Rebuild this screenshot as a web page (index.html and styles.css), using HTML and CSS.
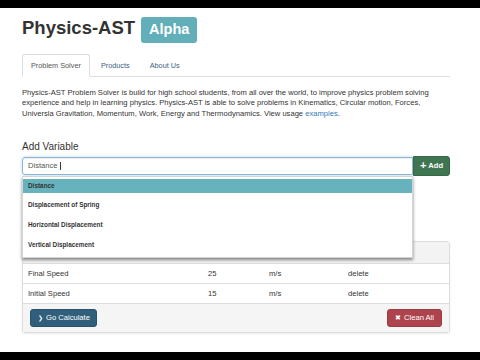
FILE: index.html
```html
<!DOCTYPE html>
<html>
<head>
    <title>Physics-AST</title>
    <link rel="stylesheet" href="styles.css">
</head>
<body>
<div class="screen">
    <div class="container">
        <header class="page-head">
            <h1>Physics-AST</h1>
            <span class="badge">Alpha</span>
        </header>

        <ul class="tabs">
            <li class="active"><a>Problem Solver</a></li>
            <li><a>Products</a></li>
            <li><a>About Us</a></li>
        </ul>

        <p class="intro">Physics-AST Problem Solver is build for high school students, from all over the world, to improve physics problem solving experience and help in learning physics. Physics-AST is able to solve problems in Kinematics, Circular motion, Forces, Universla Gravitation, Momentum, Work, Energy and Thermodynamics. View usage <a class="link">examples</a>.</p>

        <h4>Add Variable</h4>
        <div class="var-box">
            <div class="input-group">
                <div class="field">Distance<span class="caret"></span></div>
                <button class="btn btn-add"><span class="plus">+</span>Add</button>
            </div>
            <ul class="suggest">
                <li class="active">Distance</li>
                <li>Displacement of Spring</li>
                <li>Horizontal Displacement</li>
                <li>Vertical Displacement</li>
            </ul>
        </div>

        <div class="panel">
            <div class="panel-head"></div>
            <div class="row">
                <span class="c1">Final Speed</span><span class="c2">25</span><span class="c3">m/s</span><span class="c4">delete</span>
            </div>
            <div class="row">
                <span class="c1">Initial Speed</span><span class="c2">15</span><span class="c3">m/s</span><span class="c4">delete</span>
            </div>
            <div class="panel-foot">
                <button class="btn btn-go"><span class="chev">&#x276F;</span>Go Calculate</button>
                <button class="btn btn-clean"><span class="x">&#x2716;</span>Clean All</button>
            </div>
        </div>
    </div>
</div>
</body>
</html>
```

FILE: styles.css
```css
body {
    margin: 0;
    background: #000;
    font-family: "Liberation Sans", Arial, sans-serif;
    font-size: 7.6px;
    color: #333;
}

.screen {
    margin-top: 8px;
    height: 344px;
    background: #fff;
    overflow: hidden;
}

.container {
    width: 428px;
    padding-left: 22px;
}

/* Kopfzeile */
.page-head {
    display: flex;
    align-items: baseline;
    padding-top: 9px;
}

h1 {
    margin: 0;
    font-size: 18.5px;
    line-height: 1;
    font-weight: bold;
    color: #333;
}

.badge {
    margin-left: 6px;
    padding: 5px 8px 6px;
    font-size: 14.5px;
    line-height: 1;
    font-weight: bold;
    color: #fff;
    background: #62aeb9;
    border-radius: 3px;
}

/* Reiter */
.tabs {
    display: flex;
    list-style: none;
    margin: 11px 0 0;
    padding: 0;
    border-bottom: 1px solid #ddd;
    font-size: 7.3px;
}

.tabs li {
    margin-bottom: -1px;
    margin-right: 2px;
}

.tabs a {
    display: block;
    padding: 5px 8px;
    line-height: 11px;
    border: 1px solid transparent;
    border-radius: 3px 3px 0 0;
    color: #3c6284;
}

.tabs li.active a {
    color: #555;
    background: #fff;
    border-color: #ddd #ddd transparent;
}

.intro {
    margin: 11px 0 0;
    line-height: 10.8px;
}

.link {
    color: #337ab7;
}

h4 {
    margin: 21px 0 0;
    font-size: 10px;
    line-height: 12px;
    font-weight: normal;
    color: #333;
}

/* Eingabe */
.var-box {
    position: relative;
    margin-top: 4px;
}

.input-group {
    display: flex;
    height: 18px;
}

.field {
    flex: 1;
    display: flex;
    align-items: center;
    padding-left: 5px;
    border: 1px solid #8fb6d6;
    border-radius: 3px 0 0 3px;
    box-shadow: inset 0 1px 1px rgba(0,0,0,.075), 0 0 3px rgba(102,175,233,.5);
    color: #555;
}

.caret {
    display: inline-block;
    width: 1px;
    height: 8px;
    margin-left: 2px;
    background: #333;
}

.btn {
    display: inline-flex;
    align-items: center;
    justify-content: center;
    height: 18px;
    padding: 0 8px;
    border: 1px solid transparent;
    border-radius: 3px;
    font-family: inherit;
    font-size: 7.6px;
    color: #fff;
    white-space: nowrap;
}

.btn-add {
    width: 37px;
    height: 20px;
    margin-top: -1px;
    padding: 0;
    border-radius: 0 3px 3px 0;
    background: #3f7550;
    border-color: #386848;
    font-weight: bold;
}

.plus {
    font-size: 11px;
    font-weight: bold;
    margin-right: 2px;
    line-height: 1;
}

/* Vorschlagsliste */
.suggest {
    position: absolute;
    top: 19px;
    left: 0;
    width: 389px;
    margin: 0;
    padding: 2px 0 2px;
    list-style: none;
    background: #fff;
    border: 1px solid #d4d4d4;
    box-shadow: 0 2px 3px rgba(0,0,0,.45);
    z-index: 2;
}

.suggest li {
    height: 20px;
    line-height: 20px;
    padding-left: 5px;
    font-size: 6.4px;
    font-weight: bold;
    color: #333;
}

.suggest li.active {
    height: 14px;
    line-height: 14px;
    margin-bottom: 2px;
    background: #67b3bd;
}

/* Tabelle */
.panel {
    margin-top: 66px;
    border: 1px solid #ddd;
    border-radius: 3px;
    box-shadow: 0 1px 2px rgba(0,0,0,.08);
}

.panel-head {
    height: 21px;
    background: #f3f3f3;
}

.row {
    display: flex;
    align-items: center;
    height: 19px;
    border-top: 1px solid #ddd;
    color: #333;
}

.c1 { width: 180px; padding-left: 5px; }
.c2 { width: 61px; }
.c3 { width: 79px; }

.panel-foot {
    display: flex;
    justify-content: space-between;
    padding: 5px 7px;
    background: #f5f5f5;
    border-top: 1px solid #ddd;
}

.btn-go {
    padding: 0 6px 0 7px;
    background: #2f5f7a;
    border-color: #28536b;
}

.btn-clean {
    padding: 0 7px;
    background: #ad434d;
    border-color: #9b3b44;
}

.chev {
    font-size: 6px;
    margin-right: 3px;
}

.x {
    font-size: 7px;
    margin-right: 3px;
}
```
